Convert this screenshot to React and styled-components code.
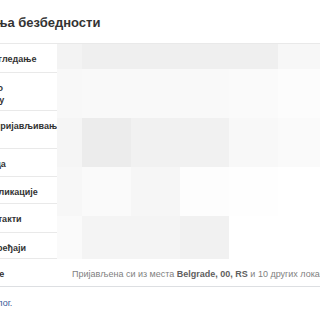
import styled, { createGlobalStyle } from 'styled-components';

const Global = createGlobalStyle`
  html, body { margin: 0; padding: 0; background: #fff; }
  body { font-family: "Liberation Sans", Arial, sans-serif; overflow: hidden; }
`;

const mosaic = [
  ['#f3f3f3', '#efefef', '#efefef', '#efefef', '#efefef', '#f7f7f7'],
  ['#f8f8f8', '#f9f9f9', '#f9f9f9', '#f9f9f9', '#fafafa', '#fcfcfc'],
  ['#f5f5f5', '#ececec', '#f1f1f1', '#f1f1f1', '#f8f8f8', '#fafafa'],
  ['#f7f7f7', '#fafafa', '#f6f6f6', '#fdfdfd', '#fefefe', '#ffffff'],
  ['#fafafa', '#f4f4f4', '#f4f4f4', '#f1f1f1', '#ffffff', '#ffffff'],
];

const rows = [
  { label: ['Безбедно прегледање'], h: 29 },
  { label: ['Обавештења о', 'пријављивању'], h: 38 },
  { label: ['Одобрења о пријављивању'], h: 38 },
  { label: ['Генератор кода'], h: 28 },
  { label: ['Лозинке за апликације'], h: 27 },
  { label: ['Поуздани контакти'], h: 29 },
  { label: ['Препознати уређаји'], h: 26 },
];

function App() {
  return (
    <>
      <Global />
      <Viewport>
        <Page>
          <Title>Подешавања безбедности</Title>
          <Table rowsTpl={rows.map((r) => r.h + 'px').join(' ')}>
            {rows.map((r, i) => (
              <Label key={i} style={{ gridRow: i + 1 }}>
                {r.label.map((l, j) => (
                  <div key={j}>{l}</div>
                ))}
              </Label>
            ))}
            <Mosaic>
              {mosaic.flat().map((c, i) => (
                <Tile key={i} color={c} />
              ))}
            </Mosaic>
          </Table>
          <SessionRow>
            <Label>Активне сесије</Label>
            <Info>
              Пријављена си из места <b>Belgrade, 00, RS</b> и 10 других локација
            </Info>
          </SessionRow>
          <Footer>
            <Link>Деактивирај свој налог.</Link>
          </Footer>
        </Page>
      </Viewport>
    </>
  );
}

const Viewport = styled.div`
  width: 320px;
  height: 320px;
  overflow: hidden;
`;

const Page = styled.div`
  margin-left: -80px;
  width: 420px;
`;

const Title = styled.h2`
  margin: 0;
  padding: 15px 0 0 10px;
  height: 28px;
  font-size: 13px;
  font-weight: bold;
  color: #333;
  line-height: 16px;
  white-space: nowrap;
`;

const Table = styled.div`
  display: grid;
  grid-template-columns: 137px 1fr;
  grid-template-rows: ${(p) => p.rowsTpl};
  border-top: 1px solid #e9e9e9;
`;

const Label = styled.div`
  grid-column: 1;
  padding: 9px 0 0 17px;
  font-size: 9px;
  line-height: 12px;
  font-weight: bold;
  color: #333;
  white-space: nowrap;
  overflow: hidden;
  border-bottom: 1px solid #e9e9e9;
`;

const Mosaic = styled.div`
  grid-column: 2;
  grid-row: 1 / span 7;
  display: grid;
  grid-template-columns: 25px repeat(4, 49px) 1fr;
  grid-template-rows: 25px repeat(3, 49px) 1fr;
`;

const Tile = styled.div`
  background: ${(p) => p.color};
`;

const SessionRow = styled.div`
  display: grid;
  grid-template-columns: 137px 1fr;
  height: 27px;
  border-bottom: 1px solid #dddfe2;
  & > ${Label} {
    border-bottom: none;
  }
`;

const Info = styled.div`
  padding: 9px 0 0 15px;
  font-size: 9px;
  line-height: 12px;
  color: #7f7f7f;
  white-space: nowrap;
  b {
    color: #606060;
  }
`;

const Footer = styled.div`
  padding: 10px 0 0 0;
  margin-left: -5px;
  font-size: 9px;
  line-height: 12px;
  white-space: nowrap;
`;

const Link = styled.span`
  color: #3b5998;
`;

export default App;
